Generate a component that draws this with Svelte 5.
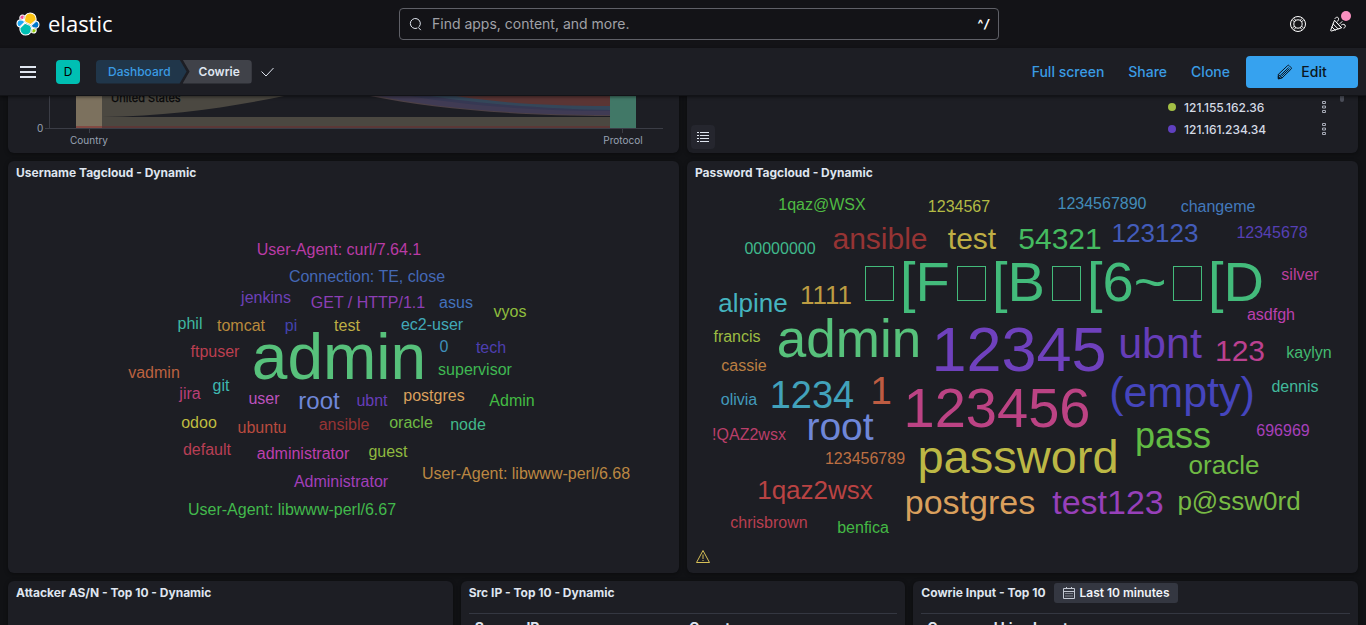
<script>
  const usernames = [
    ['User-Agent: curl/7.64.1', 339, 255, 16, '#b93ba4'],
    ['Connection: TE, close', 367, 282, 16, '#4468b5'],
    ['jenkins', 266, 303, 16, '#6c41b8'],
    ['GET / HTTP/1.1', 368, 308, 16, '#8c3fb5'],
    ['asus', 456, 308, 16, '#4372bd'],
    ['vyos', 510, 317, 16, '#8fbe3d'],
    ['phil', 190, 329, 16, '#3fb8a0'],
    ['tomcat', 241, 331, 16, '#b98a3c'],
    ['pi', 291, 331, 16, '#4343ad'],
    ['test', 347, 331, 16, '#bfae44'],
    ['ec2-user', 432, 330, 16, '#41a9b8'],
    ['0', 444, 352, 16, '#3f8fba'],
    ['tech', 491, 353, 16, '#4e3fb0'],
    ['ftpuser', 215, 357, 16, '#bb3f50'],
    ['admin', 339, 379, 64, '#57c17b'],
    ['supervisor', 475, 375, 16, '#3fb852'],
    ['vadmin', 154, 378, 16, '#bc6240'],
    ['git', 221, 391, 16, '#3fb8b0'],
    ['jira', 190, 399, 16, '#b93f78'],
    ['user', 264, 404, 16, '#bc52bc'],
    ['root', 319, 409, 24, '#6f87d8'],
    ['ubnt', 372, 406, 16, '#663db8'],
    ['postgres', 434, 401, 16, '#daa05d'],
    ['Admin', 512, 406, 16, '#43bb43'],
    ['odoo', 199, 428, 16, '#bfbc40'],
    ['ubuntu', 262, 433, 16, '#b94b3f'],
    ['ansible', 344, 430, 16, '#963434'],
    ['oracle', 411, 428, 16, '#6fba44'],
    ['node', 468, 430, 16, '#42b98a'],
    ['default', 207, 455, 16, '#b83f55'],
    ['administrator', 303, 459, 16, '#bc3fae'],
    ['guest', 388, 457, 16, '#8fb93f'],
    ['User-Agent: libwww-perl/6.68', 526, 479, 16, '#bb8742'],
    ['Administrator', 341, 487, 16, '#a23fba'],
    ['User-Agent: libwww-perl/6.67', 292, 515, 16, '#42b94c']
  ];

  const passwords = [
    ['1qaz@WSX', 822, 210, 16, '#4fbb43'],
    ['1234567', 959, 212, 16, '#b3ba44'],
    ['1234567890', 1102, 209, 16, '#428cb9'],
    ['changeme', 1218, 212, 16, '#4379bc'],
    ['00000000', 780, 254, 16, '#40b98c'],
    ['ansible', 880, 249, 30, '#963434'],
    ['test', 972, 249, 30, '#bfae44'],
    ['54321', 1060, 249, 30, '#45bb60'],
    ['123123', 1155, 242, 26, '#435cba'],
    ['12345678', 1272, 238, 16, '#5640b4'],
    ['silver', 1300, 280, 16, '#bc3f9c'],
    ['asdfgh', 1271, 320, 16, '#bb40ae'],
    ['alpine', 753, 312, 26, '#45b4bf'],
    ['1111', 826, 304, 26, '#bc9c42'],
    ['francis', 737, 342, 16, '#9cbc42'],
    ['cassie', 744, 371, 16, '#bb7e42'],
    ['admin', 849, 357, 53, '#57c17b'],
    ['12345', 1019, 371, 63, '#6f41bd'],
    ['ubnt', 1160, 358, 43, '#663db8'],
    ['123', 1240, 361, 30, '#bb4190'],
    ['kaylyn', 1309, 358, 16, '#43ba71'],
    ['dennis', 1295, 392, 16, '#42b99c'],
    ['(empty)', 1182, 407, 43, '#4545bd'],
    ['1234', 812, 408, 38, '#42a2bb'],
    ['1', 881, 404, 39, '#bd5c42'],
    ['123456', 997, 427, 56, '#bc4384'],
    ['olivia', 739, 405, 16, '#429abb'],
    ['!QAZ2wsx', 749, 440, 16, '#ba3f6a'],
    ['root', 840, 440, 39, '#6f87d8'],
    ['123456789', 865, 464, 16, '#bc6f42'],
    ['password', 1018, 473, 47, '#bcb845'],
    ['pass', 1173, 448, 36, '#62bb44'],
    ['696969', 1283, 436, 16, '#a740ba'],
    ['oracle', 1224, 474, 26, '#6fba44'],
    ['1qaz2wsx', 815, 499, 26, '#b94343'],
    ['postgres', 970, 514, 34, '#daa05d'],
    ['test123', 1108, 514, 34, '#9740b9'],
    ['p@ssw0rd', 1239, 510, 26, '#78ba44'],
    ['chrisbrown', 769, 528, 16, '#b83f50'],
    ['benfica', 863, 533, 16, '#44b944']
  ];

  // Escape characters have no glyph; each one is drawn as an empty box.
  const escapeParts = [
    ['[F', 900], ['[B', 992], ['[6~', 1087], ['[D', 1208]
  ];
  const escapeBoxes = [865, 957, 1052, 1173];

  const legend = [
    { ip: '121.155.162.36', color: '#a3bf45' },
    { ip: '121.161.234.34', color: '#6040bf' }
  ];
</script>

<div class="app">
  <header class="top">
    <a class="brand" href="#home" aria-label="Elastic home">
      <svg width="24" height="24" viewBox="0 0 32 32" aria-hidden="true">
        <g stroke="#fff" stroke-width="1.4" stroke-linejoin="round">
          <path fill="#fec514" d="M12.58 13.788l7.002 3.211 7.066-6.213a7.854 7.854 0 0 0 .152-1.557c0-4.356-3.536-7.9-7.884-7.9-2.604 0-5.026 1.289-6.493 3.45l-1.17 6.112z" />
          <path fill="#00bfb3" d="M5.333 21.228a7.964 7.964 0 0 0-.173 1.599c0 4.366 3.53 7.916 7.88 7.916a7.93 7.93 0 0 0 6.54-3.47l1.154-6.08-1.56-3.01-7.03-3.23z" />
          <path fill="#f04e98" d="M5.288 9.067l4.8 1.137L11.14 4.73a3.785 3.785 0 0 0-6.076 3.015c0 .456.08.902.224 1.322z" />
          <path fill="#1ba9f5" d="M4.872 10.214a5.295 5.295 0 0 0-3.541 5.012 5.25 5.25 0 0 0 3.353 4.92l6.733-6.135-1.237-2.663z" />
          <path fill="#93c90e" d="M20.87 27.27a3.773 3.773 0 0 0 2.285.783 3.784 3.784 0 0 0 3.77-3.794c0-.46-.08-.906-.224-1.323l-4.797-1.127z" />
          <path fill="#0077cc" d="M21.848 20.563l5.28 1.238a5.293 5.293 0 0 0 3.54-5.012 5.25 5.25 0 0 0-3.362-4.91l-6.906 6.07z" />
        </g>
      </svg>
      <span class="wordmark">elastic</span>
    </a>
    <label class="search">
      <svg width="16" height="16" viewBox="0 0 16 16" fill="none" stroke="#dfe5ef" aria-hidden="true">
        <path d="M9.300 12.100a5 5 0 1 1 1.800-1.300M10.200 11.300l2.600 2.800" />
      </svg>
      <input type="search" placeholder="Find apps, content, and more." aria-label="Find apps, content, and more." />
      <kbd><span>^</span><i>/</i></kbd>
    </label>
    <div class="tools">
      <button aria-label="Help">
        <svg width="16" height="16" viewBox="0 0 16 16" fill="none" stroke="#fff" aria-hidden="true">
          <circle cx="8" cy="8" r="7.5" />
          <circle cx="8" cy="8" r="4.2" />
          <path d="M2.500 4.200l2.200 1.700M4.200 2.500l1.700 2.200M13.500 4.200l-2.200 1.700M11.800 2.500l-1.700 2.200M2.500 11.800l2.200-1.700M4.200 13.500l1.700-2.200M13.500 11.800l-2.200-1.700M11.800 13.500l-1.700-2.200" />
        </svg>
      </button>
      <button aria-label="What's new">
        <svg width="16" height="16" viewBox="0 0 16 16" fill="none" stroke="#fff" stroke-linejoin="round" stroke-linecap="round" aria-hidden="true">
          <path d="M4.4 4.6L.7 14.2c-.2.6.3 1 .8.8l9.8-3.1zM3.2 8l5 5M2 11l3.3 3.2M6 6l5.2 5.6M5 2.4C6 .6 8.6.8 8.6 3c0 1-.5 1.8-1.2 2.3M10 7.6l2-2M11.5 8.8c1.4-1 3.8-.7 3.8 1.3 0 1-.6 1.8-1.4 2" />
        </svg>
        <i class="dot"></i>
      </button>
    </div>
  </header>

  <nav class="bar">
    <button class="menu" aria-label="Toggle navigation">
      <svg width="16" height="16" viewBox="0 0 16 16" fill="#dfe5ef" aria-hidden="true">
        <path d="M0 2h16v2H0zM0 7h16v2H0zM0 12h16v2H0z" />
      </svg>
    </button>
    <button class="space" aria-label="Default space">D</button>
    <div class="crumbs">
      <a class="crumb first" href="#dashboards">Dashboard</a>
      <span class="crumb last" aria-current="page">Cowrie</span>
    </div>
    <svg class="saved" width="16" height="16" viewBox="0 0 16 16" fill="none" stroke="#dfe5ef" aria-hidden="true">
      <path d="M1.500 7.500l4.500 4.500L13.500 4" />
    </svg>
    <div class="actions">
      <button>Full screen</button>
      <button>Share</button>
      <button>Clone</button>
    </div>
    <button class="edit">
      <svg width="16" height="16" viewBox="0 0 16 16" fill="none" stroke="#0b1620" stroke-linejoin="round" aria-hidden="true">
        <path d="M1.3 10.4L10.6 1.6c.5-.5 1-.5 1.5 0l2 2c.5.5.5 1 0 1.5L5 14l-3.6.7zM3.2 11.6l8.4-8M1.4 10.5l3.5 3.6M4.4 12.4l8.2-7.8" />
        <path d="M1.3 12.5l2 2-2 .4z" fill="#0b1620" />
      </svg>
      Edit
    </button>
  </nav>

  <main>
    <div class="row two">
      <section class="panel cut" aria-label="Country to protocol flow">
        <svg class="flow" viewBox="8 96 671 57">
          <path fill="#4b4841" d="M102 96H284C230 107 170 116 102 117Z" />
          <rect x="102" y="117" width="508" height="9" fill="#4b4841" />
          <rect x="102" y="126" width="508" height="2" fill="#5b3837" />
          <path fill="#4d4146" d="M370 96C430 108 510 116 610 116V96Z" />
          <path fill="#403b54" d="M378 96C436 108 516 115 610 115V96Z" />
          <path fill="#363853" d="M410 96C470 106 540 111 610 111V96Z" />
          <path fill="#34475a" d="M430 96C480 104 550 109 610 110V96Z" />
          <path fill="#5b3534" d="M456 96C500 103 550 106 610 106V96Z" />
          <rect x="76" y="96" width="26" height="32" fill="#7c715e" />
          <rect x="76" y="126" width="26" height="2" fill="#824a43" />
          <rect x="610" y="96" width="26" height="32" fill="#417867" />
          <path d="M49.500 96V128M45 128.500H663M89.500 129V133M622.500 129V133" stroke="#3b3d46" fill="none" />
          <text x="111" y="102" class="country">United States</text>
          <text x="37" y="132">0</text>
          <text x="89" y="144" text-anchor="middle">Country</text>
          <text x="623" y="144" text-anchor="middle">Protocol</text>
        </svg>
      </section>
      <section class="panel cut legendpanel" aria-label="Source addresses">
        <button class="list" aria-label="Toggle legend">
          <svg width="16" height="16" viewBox="0 0 16 16" fill="#dfe5ef" aria-hidden="true">
            <path d="M2 3h2v1H2zM5 3h9v1H5zM2 6h2v1H2zM5 6h9v1H5zM2 9h2v1H2zM5 9h9v1H5zM2 12h2v1H2zM5 12h9v1H5z" />
          </svg>
        </button>
        <ul>
          {#each legend as item}
            <li>
              <i style:background={item.color}></i>
              <span>{item.ip}</span>
              <button aria-label="Actions for {item.ip}">
                <svg width="6" height="14" viewBox="0 0 6 14" fill="none" stroke="#a5a9b4" aria-hidden="true">
                  <path d="M1.500 1.500h3v2h-3zM1.500 6h3v2h-3zM1.500 10.500h3v2h-3z" />
                </svg>
              </button>
            </li>
          {/each}
        </ul>
        <i class="thumb"></i>
      </section>
    </div>

    <div class="row two">
      <section class="panel">
        <h2>Username Tagcloud - Dynamic</h2>
        <svg class="cloud" viewBox="8 185 671 388">
          {#each usernames as [word, x, y, size, color]}
            <text {x} {y} font-size={size} fill={color}>{word}</text>
          {/each}
        </svg>
      </section>
      <section class="panel">
        <h2>Password Tagcloud - Dynamic</h2>
        <svg class="cloud" viewBox="687 185 671 388">
          {#each passwords as [word, x, y, size, color]}
            <text {x} {y} font-size={size} fill={color}>{word}</text>
          {/each}
          <g fill="#43bb7b" font-size="56">
            {#each escapeParts as [part, x]}
              <text {x} y="301" class="start">{part}</text>
            {/each}
          </g>
          <g fill="none" stroke="#43bb7b">
            {#each escapeBoxes as x}
              <rect x={x + 0.5} y="266.500" width="28" height="34" />
            {/each}
          </g>
          <path d="M703 550.500L709.500 562.500H696.500ZM703 554.500V559M703 560V561" fill="none" stroke="#d6bf57" />
        </svg>
      </section>
    </div>

    <div class="row three">
      <section class="panel">
        <h2>Attacker AS/N - Top 10 - Dynamic</h2>
      </section>
      <section class="panel">
        <h2>Src IP - Top 10 - Dynamic</h2>
        <table>
          <thead><tr><th>Source IP</th><th>Count</th></tr></thead>
        </table>
      </section>
      <section class="panel">
        <h2>
          Cowrie Input - Top 10
          <button class="range">
            <svg width="12" height="12" viewBox="0 0 12 12" fill="none" stroke="#c3c8d2" aria-hidden="true">
              <path d="M.5 1.500h11v10H.5zM.5 4.500h11M3.500 0v2M8.500 0v2" />
              <path d="M2.500 6.500h7M2.500 9h7" stroke-dasharray="1 1" />
            </svg>
            Last 10 minutes
          </button>
        </h2>
        <table>
          <thead><tr><th>Command Line Input</th></tr></thead>
        </table>
      </section>
    </div>
  </main>
</div>

<style>
  :global(body) {
    margin: 0;
    background: #131317;
  }
  .app {
    display: flex;
    flex-direction: column;
    height: 100vh;
    overflow: hidden;
    background: #111215;
    color: #dfe5ef;
    font-family: Inter, sans-serif;
    font-size: 14px;
  }
  * {
    box-sizing: border-box;
  }
  button {
    border: 0;
    padding: 0;
    background: none;
    color: inherit;
    font: inherit;
    display: flex;
    align-items: center;
    justify-content: center;
  }
  a {
    text-decoration: none;
    color: inherit;
  }
  .top {
    flex: none;
    height: 48px;
    display: flex;
    align-items: center;
    justify-content: space-between;
    background: #131317;
  }
  .brand {
    min-width: 120px;
    padding-left: 16px;
    display: flex;
    align-items: center;
    gap: 8px;
  }
  .wordmark {
    font: 22px/30px "Open Sans", sans-serif;
    padding-bottom: 2px;
    color: #fff;
  }
  .search {
    flex: 0 1 600px;
    height: 32px;
    display: flex;
    align-items: center;
    gap: 8px;
    padding: 0 9px 0 8px;
    border: 1px solid #5f6067;
    border-radius: 4px;
  }
  .search input {
    flex: 1;
    min-width: 0;
    border: 0;
    outline: 0;
    padding: 0;
    background: none;
    color: #dfe5ef;
    font: 14px/20px Inter, sans-serif;
  }
  .search input::placeholder {
    color: #a0a1a7;
    opacity: 1;
  }
  .search kbd {
    display: flex;
    gap: 1px;
    font: 700 12px/16px Inter, sans-serif;
    color: #fff;
  }
  .tools {
    display: flex;
    padding-right: 8px;
  }
  .tools button {
    width: 40px;
    height: 40px;
    position: relative;
  }
  .dot {
    position: absolute;
    top: 7px;
    right: 7px;
    width: 10px;
    height: 10px;
    border-radius: 50%;
    background: #f990c0;
  }
  .bar {
    flex: none;
    height: 48px;
    display: flex;
    align-items: center;
    padding: 0 8px;
    background: #1d1e24;
    border-bottom: 1px solid #121317;
    box-shadow: 0 1px 3px #00000080;
    z-index: 1;
  }
  .menu {
    width: 40px;
    height: 40px;
  }
  .space {
    width: 24px;
    height: 24px;
    margin: 0 16px 0 8px;
    border-radius: 4px;
    background: #00bfb3;
    color: #000;
    font-size: 12px;
  }
  .crumbs {
    display: flex;
    font-size: 12px;
    line-height: 24px;
  }
  .crumb.first {
    padding: 0 16px 0 12px;
    border-radius: 4px 0 0 4px;
    background: #20364a;
    color: #3a9be3;
    font-weight: 500;
    clip-path: polygon(0 0, calc(100% - 7px) 0, 100% 50%, calc(100% - 7px) 100%, 0 100%);
  }
  .crumb.last {
    margin-left: -4px;
    padding: 0 12px 0 16px;
    border-radius: 0 4px 4px 0;
    background: #404249;
    color: #dfe5ef;
    font-weight: 600;
    clip-path: polygon(0 0, 100% 0, 100% 100%, 0 100%, 7px 50%);
  }
  .saved {
    margin-left: 8px;
  }
  .actions {
    margin-left: auto;
    display: flex;
    gap: 8px;
    padding-right: 8px;
  }
  .actions button {
    height: 32px;
    padding: 0 8px;
    color: #3a9be3;
    font-weight: 500;
  }
  .edit {
    width: 112px;
    height: 32px;
    gap: 8px;
    border-radius: 4px;
    background: #36a2ef;
    color: #0b1620;
    font-weight: 500;
  }
  main {
    flex: 1;
    min-height: 0;
    overflow: hidden;
    display: flex;
    flex-direction: column;
    gap: 8px;
    padding: 0 8px;
  }
  .row {
    display: grid;
    gap: 8px;
    flex: none;
  }
  .two {
    grid-template-columns: 1fr 1fr;
  }
  .three {
    grid-template-columns: 1fr 1fr 1fr;
  }
  .panel {
    min-width: 0;
    background: #1d1e24;
    border-radius: 6px;
    box-shadow: 0 1px 4px #00000066;
  }
  .panel.cut {
    border-radius: 0 0 6px 6px;
  }
  h2 {
    margin: 0;
    padding: 0 8px;
    display: flex;
    align-items: center;
    gap: 8px;
    font-size: 12px;
    line-height: 24px;
    font-weight: 700;
  }
  .flow,
  .cloud {
    display: block;
    width: 100%;
  }
  .flow text {
    font-size: 10px;
    fill: #98a2b3;
  }
  .flow .country {
    font-size: 11px;
    fill: #08080a;
    stroke: #08080a;
    stroke-width: 0.3px;
  }
  .cloud text {
    font-family: "Liberation Sans", Arial, sans-serif;
    text-anchor: middle;
  }
  .cloud .start {
    text-anchor: start;
  }
  .legendpanel {
    display: flex;
    align-items: flex-end;
    justify-content: space-between;
    padding: 0 14px 4px 4px;
  }
  .list {
    width: 24px;
    height: 24px;
    border-radius: 4px;
    background: #25262e;
  }
  ul {
    margin: 0 8px 9px auto;
    padding: 0;
    width: 164px;
    list-style: none;
  }
  li {
    display: flex;
    align-items: center;
    height: 22px;
    font-size: 12px;
    font-weight: 500;
    color: #d4dae5;
  }
  li i {
    width: 8px;
    height: 8px;
    margin-right: 8px;
    border-radius: 50%;
  }
  li button {
    margin-left: auto;
    width: 16px;
    height: 16px;
  }
  .thumb {
    align-self: flex-start;
    width: 4px;
    height: 6px;
    border-radius: 0 0 2px 2px;
    background: #4b4e59;
  }
  .range {
    height: 20px;
    padding: 0 9px;
    gap: 5px;
    border-radius: 3px;
    background: #343741;
    font-size: 12px;
    font-weight: 600;
    color: #f0f3f8;
  }
  table {
    width: calc(100% - 16px);
    margin: 8px 8px 0;
    border-top: 1px solid #343741;
    border-spacing: 0;
    table-layout: fixed;
  }
  th {
    padding: 4px 6px;
    text-align: left;
    font-size: 14px;
    line-height: 20px;
    font-weight: 700;
  }
</style>
